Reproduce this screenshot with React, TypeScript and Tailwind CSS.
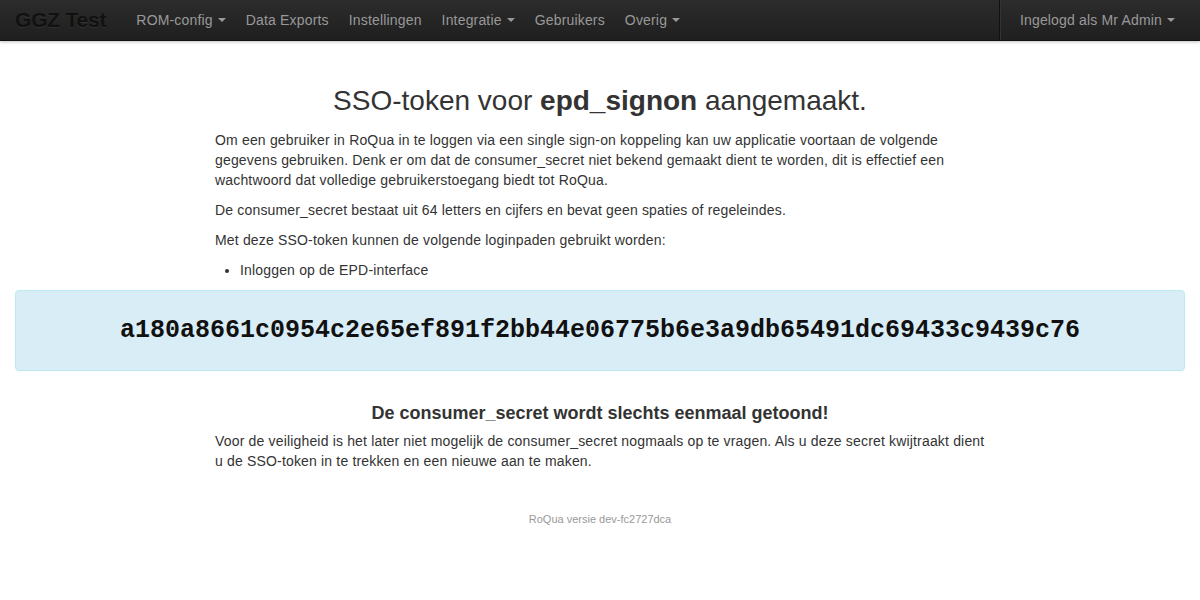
function Caret() {
  return (
    <span className="ml-[5px] inline-block h-0 w-0 border-x-[4px] border-t-[4px] border-x-transparent border-t-[#999] align-middle" />
  );
}

const navItems = [
  { label: "ROM-config", dropdown: true },
  { label: "Data Exports" },
  { label: "Instellingen" },
  { label: "Integratie", dropdown: true },
  { label: "Gebruikers" },
  { label: "Overig", dropdown: true },
];

export default function App() {
  return (
    <div className="min-h-[600px] bg-white font-['Liberation_Sans',Arial,sans-serif] text-[14px] leading-5 tracking-[0.17px] text-[#333]">
      {/* Navbar */}
      <div className="flex h-[41px] items-stretch border-b border-[#111] bg-gradient-to-b from-[#2c2c2c] to-[#1f1f1f] pl-[15px] pr-[15px] shadow-[0_1px_3px_rgba(0,0,0,0.25)]">
        <a className="flex items-center pr-[20px] text-[21px] font-bold tracking-[-0.2px] text-[#111] [text-shadow:0_1px_0_rgba(255,255,255,0.08)]">
          GGZ Test
        </a>
        <ul className="flex items-stretch">
          {navItems.map((item) => (
            <li key={item.label} className="flex items-center px-[10px] text-[#999]">
              {item.label}
              {item.dropdown && <Caret />}
            </li>
          ))}
        </ul>
        <div className="ml-auto flex items-stretch border-l border-l-[#111] shadow-[inset_1px_0_0_#333]">
          <div className="flex items-center pl-[20px] pr-[10px] text-[#999]">
            Ingelogd als Mr Admin
            <Caret />
          </div>
        </div>
      </div>

      {/* Content */}
      <div className="px-[15px]">
        <div className="mx-auto w-[770px]">
          <h1 className="mb-[13px] mt-[44px] text-center text-[28px] leading-[32px] font-normal tracking-normal">
            SSO-token voor <b className="font-bold">epd_signon</b> aangemaakt.
          </h1>
          <p className="mb-[10px]">
            Om een gebruiker in RoQua in te loggen via een single sign-on koppeling kan uw applicatie voortaan de volgende
            gegevens gebruiken. Denk er om dat de consumer_secret niet bekend gemaakt dient te worden, dit is effectief een
            wachtwoord dat volledige gebruikerstoegang biedt tot RoQua.
          </p>
          <p className="mb-[10px]">
            De consumer_secret bestaat uit 64 letters en cijfers en bevat geen spaties of regeleindes.
          </p>
          <p className="mb-[10px]">Met deze SSO-token kunnen de volgende loginpaden gebruikt worden:</p>
          <ul className="mb-[10px] ml-[25px] list-disc">
            <li>Inloggen op de EPD-interface</li>
          </ul>
        </div>

        <div className="flex h-[81px] items-center justify-center rounded-[4px] border border-[#bce8f1] bg-[#d9edf7]">
          <span className="font-['Liberation_Mono','Courier_New',monospace] text-[25px] font-bold tracking-normal text-[#111]">
            a180a8661c0954c2e65ef891f2bb44e06775b6e3a9db65491dc69433c9439c76
          </span>
        </div>

        <div className="mx-auto w-[770px]">
          <h3 className="mb-[6px] mt-[30px] text-center text-[18px] leading-[24px] font-bold tracking-normal">
            De consumer_secret wordt slechts eenmaal getoond!
          </h3>
          <p>
            Voor de veiligheid is het later niet mogelijk de consumer_secret nogmaals op te vragen. Als u deze secret kwijtraakt dient
            u de SSO-token in te trekken en een nieuwe aan te maken.
          </p>
          <p className="mt-[38px] text-center text-[11px] tracking-normal text-[#999]">RoQua versie dev-fc2727dca</p>
        </div>
      </div>
    </div>
  );
}
